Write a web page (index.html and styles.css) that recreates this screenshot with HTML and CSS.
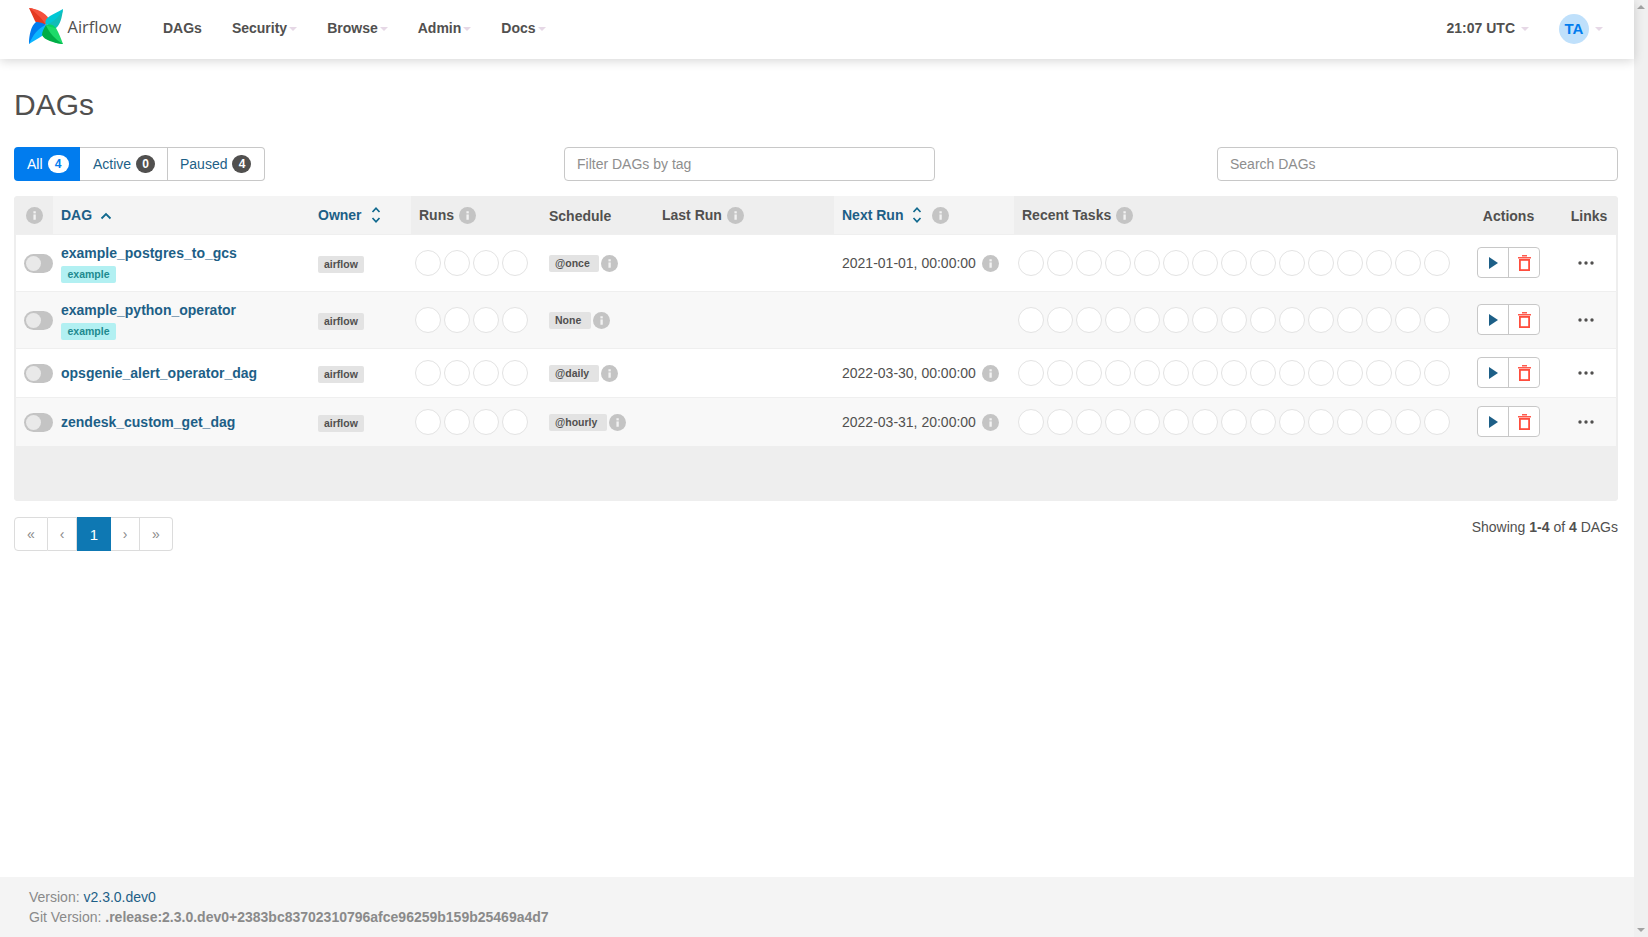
FILE: index.html
```html
<!DOCTYPE html>
<html lang="en">
<head>
<meta charset="utf-8">
<title>DAGs - Airflow</title>
<link rel="stylesheet" href="styles.css">
</head>
<body>
<svg class="defs" width="0" height="0"><defs>
<symbol id="info" viewBox="0 0 16 16"><circle cx="8" cy="8" r="8" fill="#c4c4c4"/><rect x="7" y="7" width="2.2" height="5" fill="#f2f2f2"/><rect x="7" y="4" width="2.2" height="2" fill="#f2f2f2"/></symbol>
<symbol id="updown" viewBox="0 0 10 18"><path d="M1.5 6 5 2.2 8.5 6M1.5 12 5 15.8 8.5 12" fill="none" stroke="#11698e" stroke-width="1.7"/></symbol>
<symbol id="play" viewBox="0 0 9 12"><path d="M0 0 9 6 0 12Z" fill="#1d5f87"/></symbol>
<symbol id="trash" viewBox="0 0 13 16"><path d="M0 2h13v1.400H0zM4 0h5v1.600H4z" fill="#ff5a4d"/><rect x="1.900" y="4.900" width="9.200" height="10.200" fill="none" stroke="#ff4d3d" stroke-width="1.800"/></symbol>
<symbol id="dots" viewBox="0 0 16 4"><circle cx="2" cy="2" r="1.700" fill="#51504f"/><circle cx="8" cy="2" r="1.700" fill="#51504f"/><circle cx="14" cy="2" r="1.700" fill="#51504f"/></symbol>
</defs></svg>
<div class="page">
<nav class="navbar">
  <a class="brand">
    <svg class="logo" viewBox="0 0 34 36" width="34" height="36">
      <path d="M0 0C6 .5 14 4 17.500 16 13 18 10 19 6 13 4 9 2 4 0 0Z" fill="#e43921"/>
      <path d="M0 0C8 1 16 4 20 11 20 13 18 15 17 17 13 10 6 4 0 0Z" fill="#f5503c"/>
      <path d="M34 1C33 8 30 14 17 17 16 14 16 11 21 8 25 6 30 3 34 1Z" fill="#00c7d4"/>
      <path d="M34 1C33 10 31 17 27 20 24 20 19 18 17 17 25 14 31 8 34 1Z" fill="#11bcb8"/>
      <path d="M0 36C1 28 3 20 17 17 18 20 18 25 13 28 9 31 4 33 0 36Z" fill="#0cb6ff"/>
      <path d="M0 36C0 27 2 18 7 14 10 14 15 15 17 17 9 20 4 27 0 36Z" fill="#017cee"/>
      <path d="M34 36C26 36 19 33 17 17 21 16 24 16 27 20 30 25 32 31 34 36Z" fill="#04d659" opacity=".9"/>
      <path d="M34 36C25 35 15 32 13 27 13 24 15 20 17 17 20 25 27 32 34 36Z" fill="#00ad46"/>
    </svg>
    <span class="brand-name">Airflow</span>
  </a>
  <ul class="menu">
    <li class="menu-item">DAGs</li>
    <li class="menu-item">Security<i class="caret"></i></li>
    <li class="menu-item">Browse<i class="caret"></i></li>
    <li class="menu-item">Admin<i class="caret"></i></li>
    <li class="menu-item">Docs<i class="caret"></i></li>
  </ul>
  <div class="nav-right">
    <span class="clock">21:07 UTC<i class="caret wide"></i></span>
    <span class="avatar">TA</span><i class="caret"></i>
  </div>
</nav>

<main class="content">
  <h1 class="title">DAGs</h1>
  <div class="filters">
    <div class="tabs">
      <a class="tab tab-on">All <span class="pill pill-white">4</span></a>
      <a class="tab tab-active">Active <span class="pill">0</span></a>
      <a class="tab tab-paused">Paused <span class="pill">4</span></a>
    </div>
    <input class="field field-tag" placeholder="Filter DAGs by tag">
    <input class="field field-search" placeholder="Search DAGs">
  </div>

  <table class="dags">
    <colgroup>
      <col class="c-toggle"><col class="c-dag"><col class="c-owner"><col class="c-runs"><col class="c-sched"><col class="c-last"><col class="c-next"><col class="c-tasks"><col class="c-actions"><col class="c-links">
    </colgroup>
    <thead>
      <tr>
        <th class="center th-first"><svg class="info"><use href="#info"/></svg></th>
        <th class="sort"><span class="th-link">DAG</span><svg class="sort-one" viewBox="0 0 12 8"><path d="M1.500 6.500 6 2l4.500 4.500" fill="none" stroke="#11698e" stroke-width="1.800"/></svg></th>
        <th class="sort"><span class="th-link">Owner</span><svg class="sort-two"><use href="#updown"/></svg></th>
        <th>Runs<svg class="info after"><use href="#info"/></svg></th>
        <th class="low">Schedule</th>
        <th>Last Run<svg class="info after"><use href="#info"/></svg></th>
        <th class="sort"><span class="th-link">Next Run</span><svg class="sort-two"><use href="#updown"/></svg><svg class="info after wider"><use href="#info"/></svg></th>
        <th>Recent Tasks<svg class="info after"><use href="#info"/></svg></th>
        <th class="center low">Actions</th>
        <th class="center low th-links">Links</th>
      </tr>
    </thead>
    <tbody>
      <tr class="tall">
        <td><span class="toggle"><span class="knob"></span></span></td>
        <td><a class="dag-name">example_postgres_to_gcs</a><div><span class="tag">example</span></div></td>
        <td><span class="badge">airflow</span></td>
        <td><div class="rings"><i></i><i></i><i></i><i></i></div></td>
        <td><span class="sched"><span class="badge badge-wide">@once</span><svg class="info"><use href="#info"/></svg></span></td>
        <td></td>
        <td><span class="next">2021-01-01, 00:00:00<svg class="info"><use href="#info"/></svg></span></td>
        <td><div class="rings"><i></i><i></i><i></i><i></i><i></i><i></i><i></i><i></i><i></i><i></i><i></i><i></i><i></i><i></i><i></i></div></td>
        <td class="center td-actions"><span class="btns"><a class="btn"><svg class="play"><use href="#play"/></svg></a><a class="btn"><svg class="trash"><use href="#trash"/></svg></a></span></td>
        <td class="center"><svg class="dots"><use href="#dots"/></svg></td>
      </tr>
      <tr class="tall">
        <td><span class="toggle"><span class="knob"></span></span></td>
        <td><a class="dag-name">example_python_operator</a><div><span class="tag">example</span></div></td>
        <td><span class="badge">airflow</span></td>
        <td><div class="rings"><i></i><i></i><i></i><i></i></div></td>
        <td><span class="sched"><span class="badge badge-wide">None</span><svg class="info"><use href="#info"/></svg></span></td>
        <td></td>
        <td></td>
        <td><div class="rings"><i></i><i></i><i></i><i></i><i></i><i></i><i></i><i></i><i></i><i></i><i></i><i></i><i></i><i></i><i></i></div></td>
        <td class="center td-actions"><span class="btns"><a class="btn"><svg class="play"><use href="#play"/></svg></a><a class="btn"><svg class="trash"><use href="#trash"/></svg></a></span></td>
        <td class="center"><svg class="dots"><use href="#dots"/></svg></td>
      </tr>
      <tr>
        <td><span class="toggle"><span class="knob"></span></span></td>
        <td><a class="dag-name">opsgenie_alert_operator_dag</a></td>
        <td><span class="badge">airflow</span></td>
        <td><div class="rings"><i></i><i></i><i></i><i></i></div></td>
        <td><span class="sched"><span class="badge badge-wide">@daily</span><svg class="info"><use href="#info"/></svg></span></td>
        <td></td>
        <td><span class="next">2022-03-30, 00:00:00<svg class="info"><use href="#info"/></svg></span></td>
        <td><div class="rings"><i></i><i></i><i></i><i></i><i></i><i></i><i></i><i></i><i></i><i></i><i></i><i></i><i></i><i></i><i></i></div></td>
        <td class="center td-actions"><span class="btns"><a class="btn"><svg class="play"><use href="#play"/></svg></a><a class="btn"><svg class="trash"><use href="#trash"/></svg></a></span></td>
        <td class="center"><svg class="dots"><use href="#dots"/></svg></td>
      </tr>
      <tr>
        <td><span class="toggle"><span class="knob"></span></span></td>
        <td><a class="dag-name">zendesk_custom_get_dag</a></td>
        <td><span class="badge">airflow</span></td>
        <td><div class="rings"><i></i><i></i><i></i><i></i></div></td>
        <td><span class="sched"><span class="badge badge-wide">@hourly</span><svg class="info"><use href="#info"/></svg></span></td>
        <td></td>
        <td><span class="next">2022-03-31, 20:00:00<svg class="info"><use href="#info"/></svg></span></td>
        <td><div class="rings"><i></i><i></i><i></i><i></i><i></i><i></i><i></i><i></i><i></i><i></i><i></i><i></i><i></i><i></i><i></i></div></td>
        <td class="center td-actions"><span class="btns"><a class="btn"><svg class="play"><use href="#play"/></svg></a><a class="btn"><svg class="trash"><use href="#trash"/></svg></a></span></td>
        <td class="center"><svg class="dots"><use href="#dots"/></svg></td>
      </tr>
    </tbody>
    <tfoot><tr><td colspan="10"></td></tr></tfoot>
  </table>

  <div class="below">
    <ul class="pager">
      <li>«</li><li>‹</li><li class="pg-on">1</li><li>›</li><li>»</li>
    </ul>
    <p class="showing">Showing <b>1-4</b> of <b>4</b> DAGs</p>
  </div>
</main>

<footer class="foot">
  <div>Version: <a class="foot-link">v2.3.0.dev0</a></div>
  <div>Git Version: <b>.release:2.3.0.dev0+2383bc83702310796afce96259b159b25469a4d7</b></div>
</footer>
</div>
<div class="scrollbar"><span class="arrow-up"></span><span class="arrow-down"></span></div>
</body>
</html>
```
FILE: styles.css
```css
* { box-sizing: border-box; }
html, body { margin: 0; height: 100%; }
body { font-family: "Liberation Sans", Arial, sans-serif; font-size: 14px; color: #51504f; background: #fff; overflow: hidden; display: flex; }
.defs { position: absolute; }
.scrollbar { flex: none; width: 14px; height: 937px; background: #f0f0f0; display: flex; flex-direction: column; justify-content: space-between; padding: 5px 0; }
.arrow-up, .arrow-down { display: block; margin: 0 auto; width: 0; height: 0; border: 4px solid transparent; }
.arrow-up { border-top: 0; border-bottom: 4px solid #a3a3a3; }
.arrow-down { border-bottom: 0; border-top: 4px solid #a3a3a3; }
.page { display: flex; flex-direction: column; height: 937px; flex: 1; min-width: 0; }

.navbar { display: flex; align-items: center; height: 59px; flex: none; background: #fff; box-shadow: 0 2px 10px rgba(0,0,0,.16); padding: 0 31px 4px 29px; position: relative; }
.brand { display: flex; align-items: center; width: 134px; }
.logo { display: block; flex: none; margin-top: -3px; }
.brand-name { font-family: "Open Sans", sans-serif; font-size: 16.500px; color: #51504f; margin-left: 4.500px; margin-top: -3px; }
.menu { display: flex; list-style: none; margin: 0; padding: 0; font-weight: bold; gap: 30px; }
.menu-item { display: flex; align-items: center; }
.caret { display: inline-block; width: 0; height: 0; margin-left: 2px; margin-top: 3px; border: 4px solid transparent; border-bottom: 0; border-top: 4px solid #e6d8e6; }
.caret.wide { margin-left: 6px; }
.nav-right { margin-left: auto; display: flex; align-items: center; font-weight: bold; }
.clock { display: flex; align-items: center; margin-right: 30px; }
.avatar { width: 30px; height: 30px; margin-top: 3px; padding-bottom: 2px; border-radius: 50%; background: #bfe0fb; color: #017cee; font-size: 15px; display: flex; align-items: center; justify-content: center; }
.nav-right > .caret { margin-left: 6px; }

.content { flex: 1; padding: 0 16px 0 14px; }
.title { font-size: 30px; font-weight: 500; margin: 29px 0 26px; line-height: 33px; color: #51504f; }
.filters { display: flex; height: 34px; }
.tabs { display: flex; width: 251px; margin-right: 299px; }
.tab { display: flex; align-items: center; gap: 5px; padding-left: 12px; color: #1d5f87; border: 1px solid #c8c8c8; border-left: 0; }
.tab-on { width: 66px; padding-left: 13px; background: #017cee; color: #fff; border: 0; border-radius: 4px 0 0 4px; }
.tab-active { width: 88px; padding-left: 13px; }
.tab-paused { width: 97px; border-radius: 0 4px 4px 0; }
.pill { min-width: 19px; height: 18px; border-radius: 9px; background: #51504f; color: #fff; font-size: 12px; font-weight: bold; display: inline-flex; align-items: center; justify-content: center; }
.pill-white { background: #fff; color: #017cee; min-width: 21px; }
.field { font: inherit; height: 34px; border: 1px solid #c8c8c8; border-radius: 4px; padding: 0 12px; background: #fff; color: #51504f; }
.field::placeholder { color: #8e8e8e; opacity: 1; }
.field-tag { width: 371px; }
.field-search { width: 401px; margin-left: auto; }

.dags { width: 1604px; margin-top: 15px; border-collapse: separate; border-spacing: 0; table-layout: fixed; background: #eee; border-radius: 4px; overflow: hidden; }
.c-toggle { width: 39px; } .c-dag { width: 257px; } .c-owner { width: 101px; } .c-runs { width: 130px; } .c-sched { width: 113px; } .c-last { width: 180px; } .c-next { width: 180px; } .c-tasks { width: 452px; } .c-actions { width: 85px; } .c-links { width: 67px; }
th { height: 38px; padding: 0 0 0 8px; text-align: left; font-weight: bold; background: #eee; white-space: nowrap; vertical-align: middle; }
th.sort { background: #f4f4f4; }
th.low { padding-top: 2px; }
th.center, td.center { text-align: center; padding-left: 0; }
th.th-first { padding-left: 2px; }
th.th-links { padding-left: 9px; }
.th-link { color: #1d5f87; }
.info { width: 17px; height: 17px; vertical-align: -4px; }
.info.after { margin-left: 5px; }
.info.wider { margin-left: 10px; }
.sort-one { width: 12px; height: 8px; margin-left: 8px; }
.sort-two { width: 10px; height: 18px; margin-left: 9px; vertical-align: -4px; }
tbody td { background: #fff; border-top: 1px solid #efefef; padding: 0 0 0 8px; vertical-align: middle; height: 49px; }
tbody tr.tall td { height: 57px; }
tbody tr:nth-child(even) td { background: #f8f8f8; }
tbody td:first-child { border-left: 2px solid #eee; }
tbody td:last-child { border-right: 2px solid #eee; padding-left: 4px; padding-bottom: 3px; }
tbody td.td-actions { padding-bottom: 1px; }
tfoot td { height: 55px; background: #eee; }

.toggle { display: block; width: 29px; height: 19px; border-radius: 10px; background: #c4c4c4; padding: 2px; }
.knob { display: block; width: 15px; height: 15px; border-radius: 50%; background: #e9e9e9; }
.dag-name { font-weight: bold; color: #1d5f87; display: block; line-height: 18px; }
.tag { display: inline-block; background: #b2f0f2; color: #1e8a8f; font-size: 10.500px; font-weight: bold; line-height: 17px; padding: 0 6.500px; border-radius: 2px; margin-top: 4px; vertical-align: top; }
.badge { display: inline-block; background: #e3e3e3; color: #51504f; font-size: 10.500px; font-weight: bold; line-height: 17px; padding: 0 6px; border-radius: 2px; margin-top: 2px; }
.badge-wide { padding: 0 9.500px 0 6px; margin-top: 0; }
.rings { display: flex; gap: 3px; margin: 0 0 1px -4.500px; }
.rings i { display: block; width: 26px; height: 26px; flex: none; border: 1px solid #e3e3e3; border-radius: 50%; background: #fff; }
.sched { display: inline-flex; align-items: center; gap: 2px; }
.next { display: inline-flex; align-items: center; gap: 6px; }
.btns { display: inline-flex; height: 31px; border: 1px solid #c8c8c8; border-radius: 4px; overflow: hidden; background: #fff; vertical-align: middle; }
.btn { width: 30px; display: flex; align-items: center; justify-content: center; }
.btn + .btn { width: 31px; border-left: 1px solid #c8c8c8; }
.play { width: 9px; height: 12px; }
.trash { width: 13px; height: 16px; }
.dots { width: 16px; height: 4px; vertical-align: middle; }

.below { display: flex; justify-content: space-between; margin-top: 16px; }
.pager { display: flex; list-style: none; margin: 0; padding: 0; height: 34px; }
.pager li { width: 29px; display: flex; align-items: center; justify-content: center; color: #8a8a8a; border: 1px solid #dcdcdc; border-left: 0; }
.pager li:first-child { width: 34px; border-left: 1px solid #dcdcdc; border-radius: 4px 0 0 4px; }
.pager li:last-child { width: 33px; border-radius: 0 4px 4px 0; }
.pager .pg-on { background: #0e78b3; color: #fff; width: 34px; border: 0; font-size: 15px; }
.showing { margin: 0; line-height: 20px; }

.foot { flex: none; height: 60px; background: #f4f4f4; padding: 10px 0 0 29px; color: #8a8a8a; line-height: 20px; }
.foot-link { color: #1d5f87; }
```
